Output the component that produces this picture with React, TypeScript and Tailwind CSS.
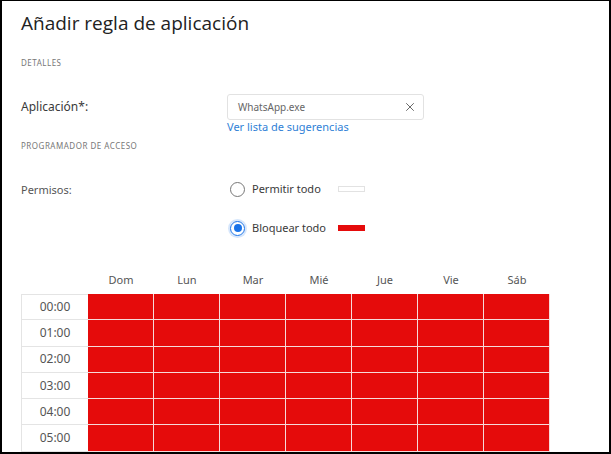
import React from "react";
import { X } from "lucide-react";

const days = ["Dom", "Lun", "Mar", "Mié", "Jue", "Vie", "Sáb"];
const hours = ["00:00", "01:00", "02:00", "03:00", "04:00", "05:00"];

function Radio({ checked }: { checked?: boolean }) {
  if (checked) {
    return (
      <span className="flex h-[15px] w-[15px] items-center justify-center rounded-full border-[1.5px] border-[#1a73e8] shadow-[0_0_0_2px_rgba(26,115,232,0.18)]">
        <span className="h-[8px] w-[8px] rounded-full bg-[#1a73e8]" />
      </span>
    );
  }
  return <span className="h-[15px] w-[15px] rounded-full border-[1.5px] border-[#777]" />;
}

export default function App() {
  return (
    <div className="h-[454px] w-[611px] overflow-hidden border-b-2 border-l-2 border-r-2 border-t border-black bg-white font-['Noto_Sans',sans-serif] text-[#444]">
      <div className="pl-[19px] pt-[8px]">
        <h1 className="font-['Open_Sans',sans-serif] text-[19px] leading-[28px] text-[#222]">
          Añadir regla de aplicación
        </h1>

        {/* Detalles */}
        <div className="mt-[20px] text-[8px] uppercase leading-[12px] tracking-[0.5px] text-[#777]">
          Detalles
        </div>

        <div className="mt-[25px] grid grid-cols-[206px_197px] items-center">
          <span className="text-[12px] text-[#3a3a3a]">Aplicación*:</span>
          <div className="flex h-[26px] items-center justify-between rounded-[3px] border border-[#e2e2e2] pl-[10px] pr-[6px]">
            <span className="text-[10px] text-[#666]">WhatsApp.exe</span>
            <X className="h-[14px] w-[14px] text-[#555]" strokeWidth={1.5} />
          </div>
        </div>
        <div className="grid grid-cols-[206px_1fr]">
          <span />
          <a className="text-[11px] leading-[14px] text-[#2f7fd6]">Ver lista de sugerencias</a>
        </div>

        {/* Programador */}
        <div className="mt-[6px] text-[8px] uppercase leading-[12px] tracking-[0.5px] text-[#777]">
          Programador de acceso
        </div>

        <div className="mt-[29px] grid grid-cols-[209px_1fr]">
          <span className="pt-[1px] text-[11px] leading-[16px] text-[#555]">Permisos:</span>
          <div className="flex flex-col gap-[23px]">
            <div className="flex h-[16px] items-center">
              <Radio />
              <span className="ml-[7px] w-[86px] text-[11px] text-[#3a3a3a]">Permitir todo</span>
              <span className="h-[6px] w-[27px] border border-[#e2e2e2] bg-white" />
            </div>
            <div className="flex h-[16px] items-center">
              <Radio checked />
              <span className="ml-[7px] w-[86px] text-[11px] text-[#3a3a3a]">Bloquear todo</span>
              <span className="h-[6px] w-[27px] bg-[#e50b0b]" />
            </div>
          </div>
        </div>

        {/* Schedule grid */}
        <div className="mt-[33px] grid w-[529px] grid-cols-[67px_repeat(7,66px)]">
          <span />
          {days.map((d) => (
            <span key={d} className="h-[25px] text-center text-[11px] leading-[22px] text-[#555]">
              {d}
            </span>
          ))}
          {hours.map((h, i) => (
            <React.Fragment key={h}>
              <span
                className={`flex h-[26.3px] items-center justify-center border-b border-l border-[#e4e4e4] bg-white text-[12px] text-[#555] ${i === 0 ? "border-t" : ""}`}
              >
                {h}
              </span>
              {days.map((d) => (
                <span key={d} className="h-[26.3px] border-b border-r border-[#f6dada] bg-[#e50b0b]" />
              ))}
            </React.Fragment>
          ))}
        </div>
      </div>
    </div>
  );
}
